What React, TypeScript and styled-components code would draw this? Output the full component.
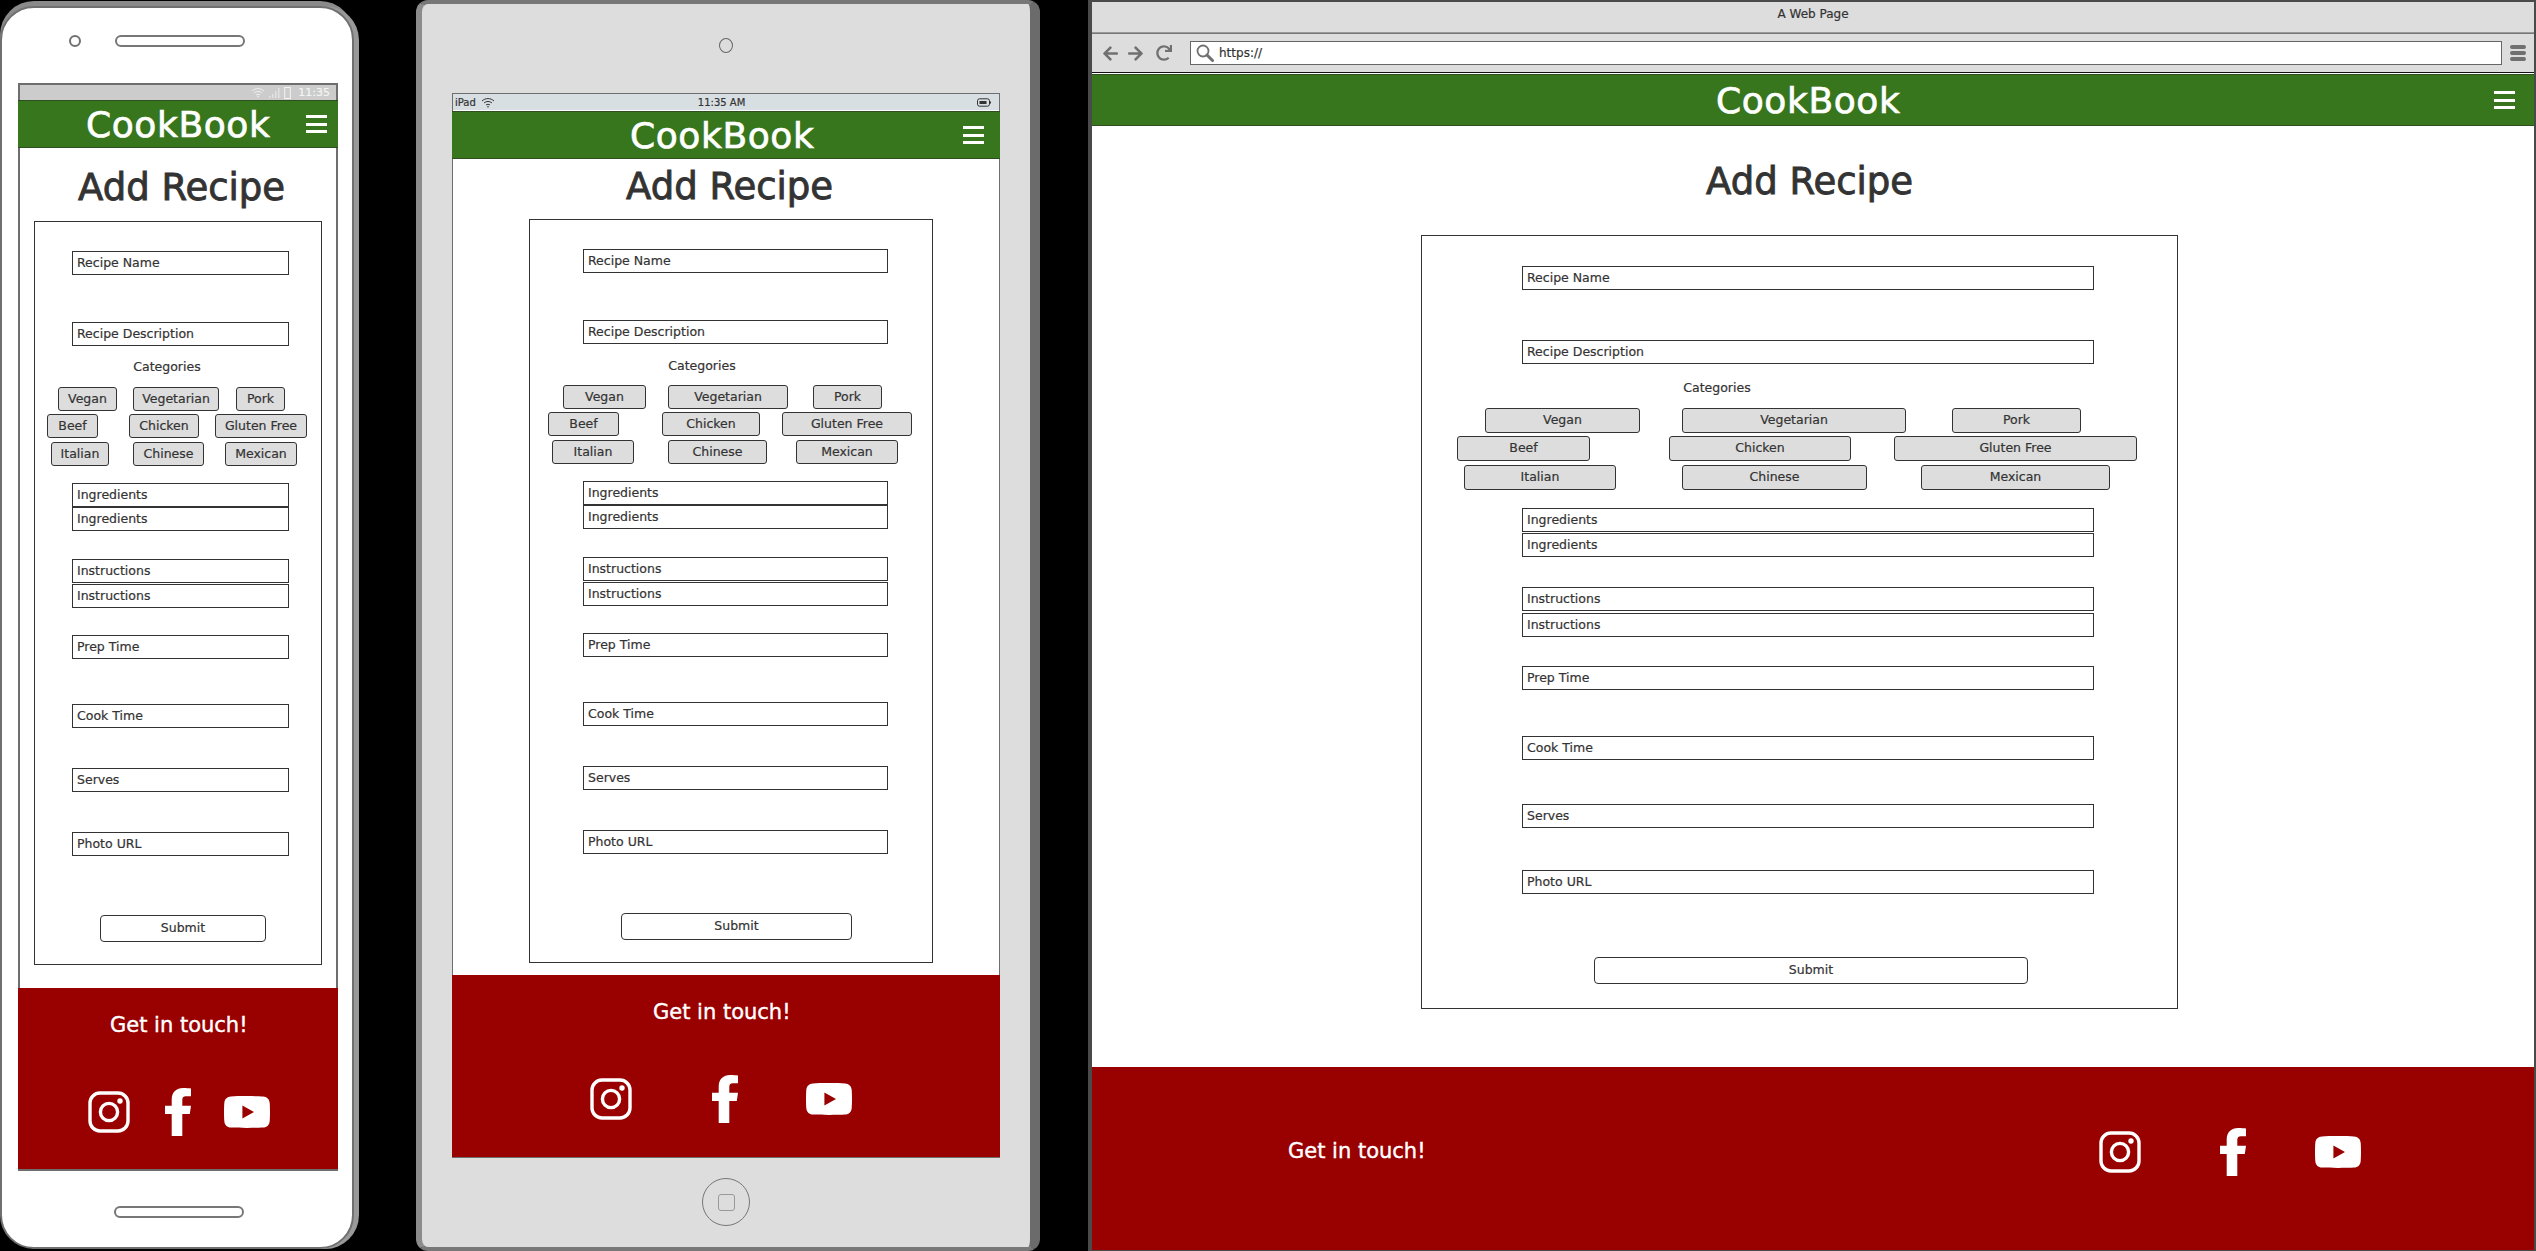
import React from "react";
import styled, { createGlobalStyle } from "styled-components";
import { FaArrowLeft, FaArrowRight, FaRedo } from "react-icons/fa";

type ChipSpec = { label: string; x: number; w: number };

type DeviceSpec = {
  left: number; // screen left edge, page coords
  headerBottom: number;
  titleLeft: number;
  titleTop: number;
  box: { x: number; y: number; w: number; h: number };
  field: { x: number; w: number; h: number };
  tops: number[];
  categories: { center: number; top: number };
  chipH: number;
  rows: { top: number; chips: ChipSpec[] }[];
  submit: { x: number; y: number; w: number };
};

const phoneSpec: DeviceSpec = {
  left: 18,
  headerBottom: 148,
  titleLeft: 60,
  titleTop: 18,
  box: { x: 34, y: 221, w: 288, h: 744 },
  field: { x: 72, w: 217, h: 24 },
  tops: [251, 322, 483, 507, 559, 584, 635, 704, 768, 832],
  categories: { center: 167, top: 358 },
  chipH: 24,
  rows: [
    {
      top: 387,
      chips: [
        { label: "Vegan", x: 58, w: 59 },
        { label: "Vegetarian", x: 133, w: 86 },
        { label: "Pork", x: 236, w: 49 },
      ],
    },
    {
      top: 414,
      chips: [
        { label: "Beef", x: 47, w: 51 },
        { label: "Chicken", x: 129, w: 70 },
        { label: "Gluten Free", x: 215, w: 92 },
      ],
    },
    {
      top: 442,
      chips: [
        { label: "Italian", x: 51, w: 58 },
        { label: "Chinese", x: 133, w: 71 },
        { label: "Mexican", x: 225, w: 72 },
      ],
    },
  ],
  submit: { x: 100, y: 915, w: 166 },
};

const tabletSpec: DeviceSpec = {
  left: 452,
  headerBottom: 159,
  titleLeft: 174,
  titleTop: 6,
  box: { x: 529, y: 219, w: 404, h: 744 },
  field: { x: 583, w: 305, h: 24 },
  tops: [249, 320, 481, 505, 557, 582, 633, 702, 766, 830],
  categories: { center: 702, top: 357 },
  chipH: 24,
  rows: [
    {
      top: 385,
      chips: [
        { label: "Vegan", x: 563, w: 83 },
        { label: "Vegetarian", x: 668, w: 120 },
        { label: "Pork", x: 813, w: 69 },
      ],
    },
    {
      top: 412,
      chips: [
        { label: "Beef", x: 548, w: 71 },
        { label: "Chicken", x: 662, w: 98 },
        { label: "Gluten Free", x: 782, w: 130 },
      ],
    },
    {
      top: 440,
      chips: [
        { label: "Italian", x: 552, w: 82 },
        { label: "Chinese", x: 668, w: 99 },
        { label: "Mexican", x: 796, w: 102 },
      ],
    },
  ],
  submit: { x: 621, y: 913, w: 231 },
};

const desktopSpec: DeviceSpec = {
  left: 1092,
  headerBottom: 126,
  titleLeft: 614,
  titleTop: 34,
  box: { x: 1421, y: 235, w: 757, h: 774 },
  field: { x: 1522, w: 572, h: 24 },
  tops: [266, 340, 508, 533, 587, 613, 666, 736, 804, 870],
  categories: { center: 1717, top: 379 },
  chipH: 25,
  rows: [
    {
      top: 408,
      chips: [
        { label: "Vegan", x: 1485, w: 155 },
        { label: "Vegetarian", x: 1682, w: 224 },
        { label: "Pork", x: 1952, w: 129 },
      ],
    },
    {
      top: 436,
      chips: [
        { label: "Beef", x: 1457, w: 133 },
        { label: "Chicken", x: 1669, w: 182 },
        { label: "Gluten Free", x: 1894, w: 243 },
      ],
    },
    {
      top: 465,
      chips: [
        { label: "Italian", x: 1464, w: 152 },
        { label: "Chinese", x: 1682, w: 185 },
        { label: "Mexican", x: 1921, w: 189 },
      ],
    },
  ],
  submit: { x: 1594, y: 957, w: 434 },
};

const fieldLabels = [
  "Recipe Name",
  "Recipe Description",
  "Ingredients",
  "Ingredients",
  "Instructions",
  "Instructions",
  "Prep Time",
  "Cook Time",
  "Serves",
  "Photo URL",
];

const RecipeForm = ({ spec }: { spec: DeviceSpec }) => {
  const { box, field, tops, rows, categories, chipH, submit } = spec;
  const innerLeft = box.x + 1;
  let y = box.y + 1;

  // each block's margin comes from the gap to whatever was placed before it
  const gapTo = (top: number, height: number) => {
    const gap = top - y;
    y = top + height;
    return gap;
  };

  const renderField = (i: number) => (
    <Field
      key={i}
      $top={gapTo(tops[i], field.h)}
      $left={field.x - innerLeft}
      $width={field.w}
      $height={field.h}
    >
      {fieldLabels[i]}
    </Field>
  );

  return (
    <FormBox $left={box.x - spec.left} $width={box.w} $height={box.h}>
      {renderField(0)}
      {renderField(1)}
      <CategoriesLabel
        $top={gapTo(categories.top, 18)}
        $width={(categories.center - innerLeft) * 2}
      >
        Categories
      </CategoriesLabel>
      {rows.map((row) => {
        let right = innerLeft;
        return (
          <ChipRow key={row.top} $top={gapTo(row.top, chipH)}>
            {row.chips.map((chip) => {
              const left = chip.x - right;
              right = chip.x + chip.w;
              return (
                <Chip key={chip.label} $left={left} $width={chip.w} $height={chipH}>
                  {chip.label}
                </Chip>
              );
            })}
          </ChipRow>
        );
      })}
      {fieldLabels.slice(2).map((_, i) => renderField(i + 2))}
      <SubmitButton
        $top={gapTo(submit.y, 27)}
        $left={submit.x - innerLeft}
        $width={submit.w}
      >
        Submit
      </SubmitButton>
    </FormBox>
  );
};

const InstagramIcon = () => (
  <svg width="42" height="42" viewBox="0 0 42 42" fill="none" stroke="#fff">
    <rect x="2" y="2" width="38" height="38" rx="10" strokeWidth="3.4" />
    <circle cx="21" cy="21" r="8.6" strokeWidth="3.4" />
    <circle cx="32" cy="10" r="2.7" fill="#fff" stroke="none" />
  </svg>
);

const FacebookIcon = () => (
  <svg width="26" height="48" viewBox="0 0 26 48" fill="#fff">
    <path d="M17.3 48H6.7V26H0v-8.3h6.7v-6.2C6.7 4 11.5 0 18 0c3 0 6 .2 8 .6v7.7h-5c-2.9 0-3.7 1.7-3.7 3.7v5.7H26L24.8 26h-7.5z" />
  </svg>
);

const YoutubeIcon = () => (
  <svg width="46" height="32" viewBox="0 0 46 32">
    <path
      fill="#fff"
      fillRule="evenodd"
      d="M7 0.4C14 0 32 0 39 0.4 43 .7 45.4 3 45.7 7c.4 5 .4 13 0 18-.3 4-2.7 6.3-6.7 6.6C32 32 14 32 7 31.6 3 31.3.6 29 .3 25c-.4-5-.4-13 0-18C.6 3 3 .7 7 .4zM18.4 9.6v13L30 16z"
    />
  </svg>
);

const Footer = ({
  row,
  textLeft,
  textTop,
  textWidth,
  socialLeft,
  socialTop,
  gaps,
  edge,
}: {
  row?: boolean;
  textLeft: number;
  textTop: number;
  textWidth?: number;
  socialLeft: number;
  socialTop: number;
  gaps: [number, number];
  edge: number;
}) => (
  <FooterBar $row={row} $edge={edge}>
    <FooterText $left={textLeft} $top={textTop} $width={textWidth}>
      Get in touch!
    </FooterText>
    <SocialRow $left={socialLeft} $top={socialTop} $gaps={gaps}>
      <InstagramIcon />
      <FacebookIcon />
      <YoutubeIcon />
    </SocialRow>
  </FooterBar>
);

const Wifi = ({ color }: { color: string }) => (
  <svg width="14" height="11" viewBox="0 0 14 11" fill="none" stroke={color} strokeWidth="1">
    <path d="M1 4c3.4-3.2 8.6-3.2 12 0M3 6c2.300-2 5.700-2 8 0M5 8c1.200-.9 2.800-.9 4 0" />
    <circle cx="7" cy="9.800" r=".8" fill={color} stroke="none" />
  </svg>
);

export default function App() {
  return (
    <>
      <GlobalStyle />
      <Canvas>
        <PhoneBody>
          <PhoneTop>
            <PhoneCamera />
            <PhoneSpeaker />
          </PhoneTop>
          <PhoneScreen>
            <PhoneStatus>
              <Wifi color="#f2f2f2" />
              <svg width="11" height="11" viewBox="0 0 11 11" fill="#e2e2e2">
                <path d="M0 9h1.500v2H0zM3 7h1.500v4H3zM6 4h1.500v7H6zM9 1h1.500v10H9z" />
              </svg>
              <svg width="7" height="13" viewBox="0 0 7 13" fill="none" stroke="#f4f4f4">
                <rect x=".7" y="1.500" width="5.600" height="11" />
              </svg>
              <PhoneTime>11:35</PhoneTime>
            </PhoneStatus>
            <Header $titleLeft={68} $right={11} $height={48}>
              <Brand>CookBook</Brand>
              <Burger />
            </Header>
            <TitleBlock $height={phoneSpec.box.y - phoneSpec.headerBottom} $left={phoneSpec.titleLeft} $top={phoneSpec.titleTop}>
              Add Recipe
            </TitleBlock>
            <RecipeForm spec={phoneSpec} />
            <Footer textLeft={92} textTop={22} socialLeft={70} socialTop={48} gaps={[35, 33]} edge={2} />
          </PhoneScreen>
          <PhoneHome />
        </PhoneBody>

        <TabletBody>
          <TabletCamera />
          <TabletScreen>
            <TabletStatus>
              <span>iPad</span>
              <Wifi color="#333" />
              <TabletClock>11:35 AM</TabletClock>
              <svg width="14" height="9" viewBox="0 0 14 9" fill="none" stroke="#333">
                <rect x=".5" y=".8" width="12" height="7.400" rx="2" />
                <rect x="2.500" y="3" width="7" height="3" fill="#333" stroke="none" />
                <path d="M13.500 3.500v2" />
              </svg>
            </TabletStatus>
            <Header $titleLeft={178} $right={16} $height={48}>
              <Brand>CookBook</Brand>
              <Burger />
            </Header>
            <TitleBlock $height={tabletSpec.box.y - tabletSpec.headerBottom} $left={tabletSpec.titleLeft} $top={tabletSpec.titleTop}>
              Add Recipe
            </TitleBlock>
            <RecipeForm spec={tabletSpec} />
            <Footer textLeft={201} textTop={22} socialLeft={138} socialTop={48} gaps={[80, 68]} edge={1} />
          </TabletScreen>
          <TabletHome>
            <TabletHomeSquare />
          </TabletHome>
        </TabletBody>

        <Browser>
          <BrowserTitle>A Web Page</BrowserTitle>
          <BrowserNav>
            <NavIcons>
              <FaArrowLeft size={17} />
              <FaArrowRight size={17} />
              <FaRedo size={16} />
            </NavIcons>
            <AddressBar>
              <svg width="18" height="18" viewBox="0 0 18 18" fill="none" stroke="#707070">
                <circle cx="7" cy="7" r="5.500" strokeWidth="1.800" />
                <path d="M11 11l5.500 5.500" strokeWidth="3" strokeLinecap="round" />
              </svg>
              https://
            </AddressBar>
            <MenuPills>
              <span />
              <span />
              <span />
            </MenuPills>
          </BrowserNav>
          <BrowserRule />
          <Header $titleLeft={624} $right={19} $height={52}>
            <Brand>CookBook</Brand>
            <Burger />
          </Header>
          <BrowserMain>
            <TitleBlock $height={desktopSpec.box.y - desktopSpec.headerBottom} $left={desktopSpec.titleLeft} $top={desktopSpec.titleTop}>
              Add Recipe
            </TitleBlock>
            <RecipeForm spec={desktopSpec} />
            <Footer row textLeft={196} textTop={69} textWidth={811} socialLeft={0} socialTop={61} gaps={[79, 69]} edge={0} />
          </BrowserMain>
        </Browser>
      </Canvas>
    </>
  );
}

const GlobalStyle = createGlobalStyle`
  html, body {
    margin: 0;
    padding: 0;
    background: #000;
  }
  * {
    box-sizing: border-box;
  }
`;

const Canvas = styled.div`
  display: flex;
  width: 2536px;
  height: 1251px;
  overflow: hidden;
  background: #000;
  color: #333;
  font-family: "DejaVu Sans", "Noto Sans", sans-serif;
  font-size: 12.5px;
  -webkit-text-stroke: 0.2px currentColor;
`;

const PhoneBody = styled.div`
  display: flex;
  flex-direction: column;
  flex: none;
  width: 354px;
  height: 1243px;
  margin-top: 6px;
  background: #fff;
  border: 2px solid #707070;
  border-radius: 34px;
  box-shadow: 5px 0 0 #999, 0 -5px 0 #8a8a8a;
`;

const PhoneTop = styled.div`
  display: flex;
  align-items: center;
  gap: 34px;
  padding: 27px 0 0 67px;
`;

const PhoneCamera = styled.div`
  width: 12px;
  height: 12px;
  border: 2px solid #707070;
  border-radius: 50%;
`;

const PhoneSpeaker = styled.div`
  width: 130px;
  height: 12px;
  border: 2px solid #777;
  border-radius: 6px;
`;

const PhoneScreen = styled.div`
  display: flex;
  flex-direction: column;
  flex: none;
  width: 320px;
  height: 1088px;
  margin: 36px 0 0 16px;
  box-shadow: inset 0 0 0 2px #6e6e6e;
`;

const PhoneStatus = styled.div`
  display: flex;
  align-items: center;
  justify-content: flex-end;
  gap: 4px;
  height: 17px;
  padding-right: 6px;
  background: #ccc;
  border: solid #6e6e6e;
  border-width: 2px 2px 0;
`;

const PhoneTime = styled.span`
  margin-left: 3px;
  color: #f4f4f4;
  font-size: 11px;
`;

const PhoneHome = styled.div`
  width: 130px;
  height: 12px;
  margin: 35px 0 0 112px;
  border: 2px solid #777;
  border-radius: 6px;
`;

const TabletBody = styled.div`
  display: flex;
  flex-direction: column;
  flex: none;
  width: 624px;
  height: 1251px;
  margin-left: 62px;
  background: #ddd;
  border: solid #777;
  border-width: 4px 10px 4px 6px;
  border-left-color: #8c8c8c;
  border-right-color: #6b6b6b;
  border-radius: 12px;
`;

const TabletCamera = styled.div`
  width: 14px;
  height: 15px;
  margin: 34px 0 0 297px;
  border: 1px solid #666;
  border-radius: 50%;
`;

const TabletScreen = styled.div`
  display: flex;
  flex-direction: column;
  flex: none;
  width: 548px;
  height: 1065px;
  margin: 40px 0 0 30px;
  background: #fff;
  box-shadow: inset 0 0 0 1px #6e6e6e;
`;

const TabletStatus = styled.div`
  display: flex;
  align-items: center;
  gap: 5px;
  height: 17px;
  margin-bottom: 1px;
  padding: 0 8px 0 2px;
  background: #d8dfe3;
  border: solid #6e6e6e;
  border-width: 1px 1px 0;
  font-size: 10px;
`;

const TabletClock = styled.span`
  margin-left: 198px;
  margin-right: auto;
`;

const TabletHome = styled.div`
  display: flex;
  align-items: center;
  justify-content: center;
  width: 48px;
  height: 48px;
  margin: 20px 0 0 280px;
  border: 1px solid #777;
  border-radius: 50%;
`;

const TabletHomeSquare = styled.div`
  width: 17px;
  height: 17px;
  border: 1px solid #999;
  border-radius: 3px;
`;

const Browser = styled.div`
  display: flex;
  flex-direction: column;
  flex: none;
  width: 1448px;
  height: 1251px;
  margin-left: 48px;
  background: #fff;
  border: solid #4a4a4a;
  border-width: 2px 2px 1px 4px;
`;

const BrowserTitle = styled.div`
  height: 31px;
  padding: 4px 0 0;
  background: #ddd;
  border-bottom: 1px solid #999;
  font-size: 12px;
  line-height: 16px;
  text-align: center;
`;

const BrowserNav = styled.div`
  display: flex;
  align-items: center;
  height: 39px;
  padding-left: 10px;
  background: #ddd;
  border-top: 1px solid #777;
`;

const NavIcons = styled.div`
  display: flex;
  align-items: center;
  gap: 8px;
  width: 88px;
  color: #707070;

  svg:last-child {
    margin-left: 4px;
  }
`;

const AddressBar = styled.div`
  display: flex;
  align-items: center;
  gap: 5px;
  width: 1312px;
  height: 24px;
  padding-left: 5px;
  background: #fff;
  border: 1px solid #666;
  font-size: 12px;
`;

const MenuPills = styled.div`
  display: flex;
  flex-direction: column;
  gap: 2px;
  width: 16px;
  margin-left: 8px;

  span {
    height: 4px;
    background: #707070;
    border-radius: 2px;
  }
`;

const BrowserRule = styled.div`
  flex: none;
  height: 2px;
  background: #fff;
  border-top: 1px solid #111;
`;

const BrowserMain = styled.div`
  display: flex;
  flex-direction: column;
  flex: 1;
`;

const Header = styled.div<{ $titleLeft: number; $right: number; $height: number }>`
  display: flex;
  flex: none;
  align-items: center;
  justify-content: space-between;
  height: ${(p) => p.$height}px;
  padding: 0 ${(p) => p.$right}px 0 ${(p) => p.$titleLeft}px;
  background: #38761d;
  border-top: 1px solid #2f4f22;
  border-bottom: 1px solid #2f4f22;
`;

const Brand = styled.div`
  margin-top: 2px;
  color: #fff;
  font-size: 36px;
  letter-spacing: 0.6px;
  line-height: 44px;
  -webkit-text-stroke: 0.7px #fff;
`;

const Burger = styled.div`
  width: 21px;
  height: 18px;
  border-top: 3px solid #fff;
  border-bottom: 3px solid #fff;
  position: relative;

  &::after {
    content: "";
    position: absolute;
    left: 0;
    right: 0;
    top: 4.500px;
    height: 3px;
    background: #fff;
  }
`;

const TitleBlock = styled.h1<{ $height: number; $left: number; $top: number }>`
  flex: none;
  height: ${(p) => p.$height}px;
  margin: 0;
  padding: ${(p) => p.$top}px 0 0 ${(p) => p.$left}px;
  color: #333;
  font-size: 37px;
  font-weight: 400;
  line-height: 44px;
  white-space: nowrap;
  -webkit-text-stroke: 0.9px #333;
`;

const FormBox = styled.div<{ $left: number; $width: number; $height: number }>`
  flex: none;
  width: ${(p) => p.$width}px;
  height: ${(p) => p.$height}px;
  margin-left: ${(p) => p.$left}px;
  background: #fff;
  border: 1px solid #333;
`;

const Field = styled.div<{ $top: number; $left: number; $width: number; $height: number }>`
  width: ${(p) => p.$width}px;
  height: ${(p) => p.$height}px;
  margin: ${(p) => p.$top}px 0 0 ${(p) => p.$left}px;
  padding-left: 4px;
  border: 1px solid #333;
  line-height: 21px;
  white-space: nowrap;
`;

const CategoriesLabel = styled.div<{ $top: number; $width: number }>`
  width: ${(p) => p.$width}px;
  margin-top: ${(p) => p.$top}px;
  line-height: 18px;
  text-align: center;
`;

const ChipRow = styled.div<{ $top: number }>`
  display: flex;
  margin-top: ${(p) => p.$top}px;
`;

const Chip = styled.div<{ $left: number; $width: number; $height: number }>`
  flex: none;
  width: ${(p) => p.$width}px;
  height: ${(p) => p.$height}px;
  margin-left: ${(p) => p.$left}px;
  background: #ddd;
  border: 1px solid #333;
  border-radius: 3px;
  line-height: 21px;
  text-align: center;
`;

const SubmitButton = styled.div<{ $top: number; $left: number; $width: number }>`
  width: ${(p) => p.$width}px;
  height: 27px;
  margin: ${(p) => p.$top}px 0 0 ${(p) => p.$left}px;
  border: 1px solid #333;
  border-radius: 4px;
  line-height: 23px;
  text-align: center;
`;

const FooterBar = styled.div<{ $row?: boolean; $edge: number }>`
  display: flex;
  flex: none;
  flex-direction: ${(p) => (p.$row ? "row" : "column")};
  align-items: flex-start;
  height: 183px;
  margin-top: auto;
  background: #990000;
  border-bottom: ${(p) => p.$edge}px solid #6e6e6e;
`;

const FooterText = styled.div<{ $left: number; $top: number; $width?: number }>`
  flex: none;
  width: ${(p) => (p.$width ? `${p.$width}px` : "auto")};
  margin: ${(p) => p.$top}px 0 0 ${(p) => p.$left}px;
  color: #fff;
  font-size: 21px;
  line-height: 30px;
  white-space: nowrap;
  -webkit-text-stroke: 0.4px #fff;
`;

const SocialRow = styled.div<{ $left: number; $top: number; $gaps: [number, number] }>`
  display: flex;
  flex: none;
  align-items: center;
  height: 48px;
  margin: ${(p) => p.$top}px 0 0 ${(p) => p.$left}px;

  svg:nth-child(2) {
    margin-left: ${(p) => p.$gaps[0]}px;
  }

  svg:nth-child(3) {
    margin-left: ${(p) => p.$gaps[1]}px;
  }
`;
